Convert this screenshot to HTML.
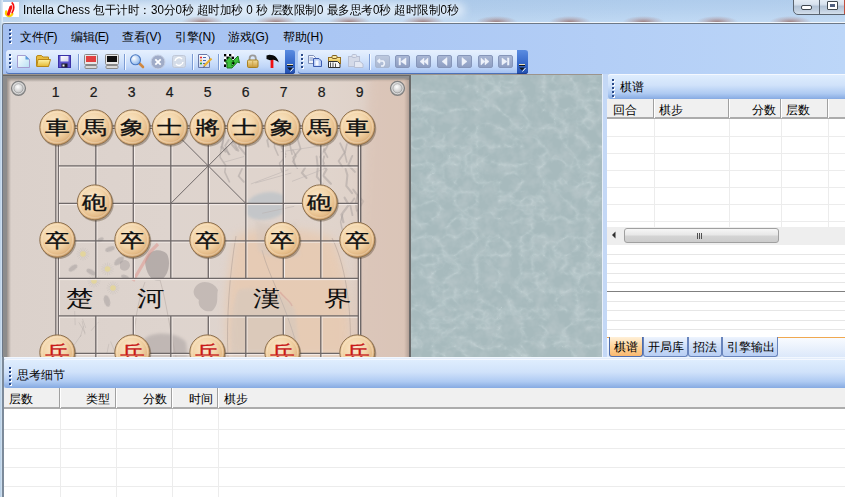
<!DOCTYPE html><html><head><meta charset="utf-8"><style>
*{box-sizing:border-box}
html,body{margin:0;padding:0}
body{width:845px;height:497px;overflow:hidden;position:relative;font-family:"Liberation Sans",sans-serif;font-size:12px;color:#000;background:#c9dcf0}
.ab{position:absolute}
.t{position:absolute;white-space:nowrap;line-height:1}
</style></head><body>

<div class="ab" style="left:0;top:0;width:845px;height:23px;background:linear-gradient(90deg,#bcd4ec 0%,#c4daf0 30%,#b8d2ee 55%,#bcd6f2 80%,#c0d8f2 100%)"></div>
<div class="ab" style="left:0;top:0;width:845px;height:23px;background:linear-gradient(rgba(150,185,225,0.35) 0%,rgba(150,185,225,0.2) 40%,rgba(220,240,255,0.15) 100%)"></div>
<div class="ab" style="left:20px;top:3px;width:445px;height:14px;background:rgba(236,244,252,0.75);filter:blur(4px);border-radius:7px"></div>
<div class="ab" style="left:0;top:0;width:845px;height:23px;background:radial-gradient(ellipse 21px 6px at 202.5px 22px, rgba(140,75,60,0.6), rgba(160,90,75,0.25) 55%, rgba(170,90,80,0) 100%),radial-gradient(ellipse 21px 6px at 276.0px 22px, rgba(140,75,60,0.6), rgba(160,90,75,0.25) 55%, rgba(170,90,80,0) 100%),radial-gradient(ellipse 21px 6px at 349.5px 22px, rgba(140,75,60,0.6), rgba(160,90,75,0.25) 55%, rgba(170,90,80,0) 100%),radial-gradient(ellipse 21px 6px at 423.0px 22px, rgba(140,75,60,0.6), rgba(160,90,75,0.25) 55%, rgba(170,90,80,0) 100%),radial-gradient(ellipse 21px 6px at 496.5px 22px, rgba(140,75,60,0.6), rgba(160,90,75,0.25) 55%, rgba(170,90,80,0) 100%),radial-gradient(ellipse 21px 6px at 570.0px 22px, rgba(140,75,60,0.6), rgba(160,90,75,0.25) 55%, rgba(170,90,80,0) 100%),radial-gradient(ellipse 21px 6px at 643.5px 22px, rgba(140,75,60,0.6), rgba(160,90,75,0.25) 55%, rgba(170,90,80,0) 100%),radial-gradient(ellipse 21px 6px at 717.0px 22px, rgba(140,75,60,0.6), rgba(160,90,75,0.25) 55%, rgba(170,90,80,0) 100%),radial-gradient(ellipse 21px 6px at 790.5px 22px, rgba(140,75,60,0.6), rgba(160,90,75,0.25) 55%, rgba(170,90,80,0) 100%)"></div>
<div class="ab" style="left:3px;top:2px;width:16px;height:15px;background:#fff"></div>
<svg class="ab" style="left:0;top:0" width="22" height="20" viewBox="0 0 22 20">
<path d="M6.2 11.5 C5.5 14 7 16.3 9.5 16 C11 15.8 12 15 12.3 14" stroke="#ffd000" stroke-width="2.4" fill="none" stroke-linecap="round"/>
<path d="M8.3 14.2 L10.8 7.2" stroke="#f41010" stroke-width="3" stroke-linecap="round"/>
<path d="M9.5 6.5 L11.8 4.8 L11.5 7.2Z" fill="#f41010"/>
<path d="M12.2 3 C14.2 4.5 14.3 9.5 12.2 12.5" stroke="#f41010" stroke-width="1.7" fill="none" stroke-linecap="round"/>
</svg>
<div class="t" style="left:23px;top:4px;font-size:12px;color:#000;transform:scaleX(0.965);transform-origin:0 0">Intella Chess 包干计时：30分0秒 超时加秒 0 秒 层数限制0 最多思考0秒 超时限制0秒</div>
<div class="ab" style="left:793px;top:-2px;width:54px;height:17px;border:1px solid #5a6470;border-radius:0 0 0 5px;background:linear-gradient(#e6eef6 0%,#d8e2ee 35%,#b4c4d6 50%,#c4d2e2 80%,#d4e0ec 100%)"></div>
<div class="ab" style="left:819px;top:0;width:1px;height:14px;background:#5a6470"></div>
<div class="ab" style="left:801px;top:5px;width:11px;height:5px;border:1px solid #404850;border-radius:2px;background:#fff"></div>
<div class="ab" style="left:827px;top:1px;width:11px;height:9px;border:1px solid #404850;border-radius:1px;background:#fff"><div class="ab" style="left:2px;top:2px;width:5px;height:3px;background:#506080"></div></div>
<div class="ab" style="left:844px;top:0;width:1px;height:14px;background:#c05040"></div>

<div class="ab" style="left:5px;top:22px;width:840px;height:1px;background:#f0f6fc"></div>
<div class="ab" style="left:1px;top:22px;width:10px;height:60px;border-left:1px solid rgba(240,246,252,0.8);border-top:1px solid #f0f6fc;border-top-left-radius:4px"></div>
<div class="ab" style="left:0;top:0;width:3px;height:497px;background:linear-gradient(90deg,#b4cce4,#e4f0fa)"></div>
<div class="ab" style="left:6px;top:23px;width:839px;height:1px;background:#6d7886"></div>
<div class="ab" style="left:2px;top:23px;width:10px;height:52px;border-left:1px solid #6d7886;border-top:1px solid #6d7886;border-top-left-radius:3px"></div>
<div class="ab" style="left:3px;top:24px;width:842px;height:50px;border-top-left-radius:2px;background:linear-gradient(90deg,#a4c0f0 0%,#abc7f4 45%,#bcd6f8 100%)"></div>
<div class="ab" style="left:9px;top:29px;width:2px;height:2px;background:#2a4a8a;box-shadow:1px 1px 0 #fff"></div><div class="ab" style="left:9px;top:33px;width:2px;height:2px;background:#2a4a8a;box-shadow:1px 1px 0 #fff"></div><div class="ab" style="left:9px;top:37px;width:2px;height:2px;background:#2a4a8a;box-shadow:1px 1px 0 #fff"></div><div class="ab" style="left:9px;top:41px;width:2px;height:2px;background:#2a4a8a;box-shadow:1px 1px 0 #fff"></div>
<div class="t" style="left:19.5px;top:31px;font-size:12px">文件<span style="letter-spacing:-0.7px">(F)</span></div>
<div class="t" style="left:70.5px;top:31px;font-size:12px">编辑<span style="letter-spacing:-0.7px">(E)</span></div>
<div class="t" style="left:121.5px;top:31px;font-size:12px">查看(V)</div>
<div class="t" style="left:174.5px;top:31px;font-size:12px">引擎(N)</div>
<div class="t" style="left:227.5px;top:31px;font-size:12px">游戏(G)</div>
<div class="t" style="left:282.5px;top:31px;font-size:12px">帮助(H)</div>
<div class="ab" style="left:6px;top:50px;width:279px;height:24px;border-radius:3px 0 0 3px;background:linear-gradient(#e6f0fe 0%,#d6e6fc 35%,#c0d6f8 70%,#a0bef0 100%);box-shadow:inset 0 -1px 0 #4e72b8"></div>
<div class="ab" style="left:285px;top:50px;width:10px;height:24px;border-radius:0 3px 3px 0;background:linear-gradient(#5a8ce0 0%,#3a6ccc 50%,#2350b0 100%);box-shadow:inset 0 -1px 0 #1a3c90"></div><svg class="ab" style="left:287px;top:63px" width="8" height="10"><rect x="0" y="1" width="6" height="1" fill="#e8e0c0"/><rect x="0" y="2" width="6" height="1" fill="#101820"/><path d="M0 4.5H6L3 7.5Z" fill="#101820"/><path d="M6.5 5L3.5 8.5" stroke="#fff" stroke-width="1"/></svg>
<div class="ab" style="left:298px;top:50px;width:219px;height:24px;border-radius:3px 0 0 3px;background:linear-gradient(#e6f0fe 0%,#d6e6fc 35%,#c0d6f8 70%,#a0bef0 100%);box-shadow:inset 0 -1px 0 #4e72b8"></div>
<div class="ab" style="left:517px;top:50px;width:11px;height:24px;border-radius:0 3px 3px 0;background:linear-gradient(#5a8ce0 0%,#3a6ccc 50%,#2350b0 100%);box-shadow:inset 0 -1px 0 #1a3c90"></div><svg class="ab" style="left:519px;top:63px" width="8" height="10"><rect x="0" y="1" width="6" height="1" fill="#e8e0c0"/><rect x="0" y="2" width="6" height="1" fill="#101820"/><path d="M0 4.5H6L3 7.5Z" fill="#101820"/><path d="M6.5 5L3.5 8.5" stroke="#fff" stroke-width="1"/></svg>
<div class="ab" style="left:9px;top:54px;width:2px;height:2px;background:#2a4a8a;box-shadow:1px 1px 0 #fff"></div><div class="ab" style="left:9px;top:58px;width:2px;height:2px;background:#2a4a8a;box-shadow:1px 1px 0 #fff"></div><div class="ab" style="left:9px;top:62px;width:2px;height:2px;background:#2a4a8a;box-shadow:1px 1px 0 #fff"></div><div class="ab" style="left:9px;top:66px;width:2px;height:2px;background:#2a4a8a;box-shadow:1px 1px 0 #fff"></div>
<div class="ab" style="left:301px;top:54px;width:2px;height:2px;background:#2a4a8a;box-shadow:1px 1px 0 #fff"></div><div class="ab" style="left:301px;top:58px;width:2px;height:2px;background:#2a4a8a;box-shadow:1px 1px 0 #fff"></div><div class="ab" style="left:301px;top:62px;width:2px;height:2px;background:#2a4a8a;box-shadow:1px 1px 0 #fff"></div><div class="ab" style="left:301px;top:66px;width:2px;height:2px;background:#2a4a8a;box-shadow:1px 1px 0 #fff"></div>
<svg class="ab" style="left:17px;top:55px" width="14" height="14"><defs><linearGradient id="gd" x1="0" y1="0" x2="1" y2="1"><stop offset="0" stop-color="#ffffff"/><stop offset="1" stop-color="#b8e0f4"/></linearGradient></defs><path d="M0.5 0.5H8.5L12.5 4.5V12.5H0.5Z" fill="url(#gd)" stroke="#a49cd0"/><path d="M8.5 0.5L12.5 4.5H8.5Z" fill="#5a9ee0"/></svg><svg class="ab" style="left:36px;top:55px" width="16" height="13"><defs><linearGradient id="gf" x1="0" y1="0" x2="0" y2="1"><stop offset="0" stop-color="#fff4a8"/><stop offset="1" stop-color="#e4b830"/></linearGradient></defs><path d="M0.5 11V2Q0.5 0.5 2 0.5H5.5L7 2H12.5V11Z" fill="#e8bc40" stroke="#b88818"/><path d="M2 4.5H14.5L12.5 11.5H0.8Z" fill="url(#gf)" stroke="#b88818"/></svg><svg class="ab" style="left:58px;top:55px" width="13" height="13"><defs><linearGradient id="gl" x1="0" y1="0" x2="1" y2="1"><stop offset="0" stop-color="#ffffff"/><stop offset="1" stop-color="#d4d4ec"/></linearGradient></defs><rect x="0.5" y="0.5" width="12" height="12" fill="#5c54cc" stroke="#3a32a8"/><rect x="2.5" y="1" width="8" height="5.5" fill="url(#gl)"/><rect x="3.5" y="8.5" width="6" height="4" fill="#1c1c2c"/><rect x="4.5" y="9.5" width="2" height="2" fill="#f0f0f0"/></svg><div class="ab" style="left:78px;top:54px;width:1px;height:16px;background:#7c9cd4;box-shadow:1px 0 0 #f4f8ff"></div><svg class="ab" style="left:84px;top:54px" width="14" height="15"><rect x="0.5" y="0.5" width="13" height="10" rx="1" fill="#e8e8e8" stroke="#888"/><rect x="2" y="2" width="10" height="6" fill="#e04040"/><rect x="1" y="11.5" width="12" height="3" rx="1" fill="#d8d8d8" stroke="#888"/></svg><svg class="ab" style="left:105px;top:54px" width="14" height="15"><rect x="0.5" y="0.5" width="13" height="10" rx="1" fill="#e8e8e8" stroke="#888"/><rect x="2" y="2" width="10" height="6" fill="#101010"/><rect x="1" y="11.5" width="12" height="3" rx="1" fill="#d8d8d8" stroke="#888"/></svg><div class="ab" style="left:124px;top:54px;width:1px;height:16px;background:#7c9cd4;box-shadow:1px 0 0 #f4f8ff"></div><svg class="ab" style="left:129px;top:53px" width="16" height="16"><defs><radialGradient id="gm" cx="35%" cy="35%" r="70%"><stop offset="0" stop-color="#ffffff"/><stop offset="1" stop-color="#88b4ec"/></radialGradient></defs><path d="M10 10L14 14" stroke="#d08840" stroke-width="2.6" stroke-linecap="round"/><circle cx="6.5" cy="6.8" r="5" fill="url(#gm)" stroke="#4a78c0" stroke-width="1.1"/></svg><svg class="ab" style="left:150px;top:54px" width="16" height="16"><circle cx="8" cy="8" r="7" fill="#a0acc8" stroke="#c8d2e6"/><path d="M5.3 5.3L10.7 10.7M10.7 5.3L5.3 10.7" stroke="#fff" stroke-width="1.8"/></svg><svg class="ab" style="left:172px;top:55px" width="14" height="13"><rect x="0.5" y="0.5" width="13" height="12" rx="2" fill="#d4dce8" stroke="#c0c8d8"/><path d="M3 6A4 4 0 0 1 10 4M11 7A4 4 0 0 1 4 9" stroke="#fff" stroke-width="1.5" fill="none"/></svg><div class="ab" style="left:192px;top:54px;width:1px;height:16px;background:#7c9cd4;box-shadow:1px 0 0 #f4f8ff"></div><svg class="ab" style="left:198px;top:54px" width="15" height="14"><defs><linearGradient id="gn" x1="0" y1="0" x2="0" y2="1"><stop offset="0" stop-color="#ffffff"/><stop offset="1" stop-color="#c8d4f0"/></linearGradient></defs><path d="M0.5 0.5H9L11.5 3V13.5H0.5Z" fill="url(#gn)" stroke="#6878a8"/><circle cx="3" cy="3.5" r="1.1" fill="#e83030"/><circle cx="3" cy="6.5" r="1.1" fill="#f0a020"/><circle cx="3" cy="9.5" r="1.1" fill="#30a030"/><path d="M5 3.5H8M5 6.5H8M5 9.5H7" stroke="#4868b0"/><path d="M6 12L13.5 4.5" stroke="#e8b030" stroke-width="2.2"/><path d="M6 12L5 13.5L6.8 12.8Z" fill="#303030"/></svg><div class="ab" style="left:218px;top:54px;width:1px;height:16px;background:#7c9cd4;box-shadow:1px 0 0 #f4f8ff"></div><svg class="ab" style="left:223px;top:53px" width="18" height="16"><rect x="1.0" y="1.0" width="2.5" height="2.6" fill="#000"/><rect x="3.5" y="1.0" width="2.5" height="2.6" fill="#fff"/><rect x="6.0" y="1.0" width="2.5" height="2.6" fill="#000"/><rect x="8.5" y="1.0" width="2.5" height="2.6" fill="#fff"/><rect x="1.0" y="3.6" width="2.5" height="2.6" fill="#fff"/><rect x="3.5" y="3.6" width="2.5" height="2.6" fill="#000"/><rect x="6.0" y="3.6" width="2.5" height="2.6" fill="#fff"/><rect x="8.5" y="3.6" width="2.5" height="2.6" fill="#000"/><rect x="1.0" y="6.2" width="2.5" height="2.6" fill="#000"/><rect x="3.5" y="6.2" width="2.5" height="2.6" fill="#fff"/><rect x="6.0" y="6.2" width="2.5" height="2.6" fill="#000"/><rect x="8.5" y="6.2" width="2.5" height="2.6" fill="#fff"/><rect x="1.0" y="8.8" width="2.5" height="2.6" fill="#fff"/><rect x="3.5" y="8.8" width="2.5" height="2.6" fill="#000"/><rect x="6.0" y="8.8" width="2.5" height="2.6" fill="#fff"/><rect x="8.5" y="8.8" width="2.5" height="2.6" fill="#000"/><rect x="1.0" y="11.4" width="2.5" height="2.6" fill="#000"/><rect x="3.5" y="11.4" width="2.5" height="2.6" fill="#fff"/><rect x="6.0" y="11.4" width="2.5" height="2.6" fill="#000"/><rect x="8.5" y="11.4" width="2.5" height="2.6" fill="#fff"/><path d="M4 15L4 9L2 9L6.5 4L11 9L9 9L9 13L12 10L10 8L15 3L16.5 10L14.5 9L9 15Z" fill="#3cc03c" stroke="#107010" stroke-width="0.9" stroke-linejoin="round"/></svg><svg class="ab" style="left:247px;top:54px" width="12" height="14"><defs><linearGradient id="gk" x1="0" y1="0" x2="0" y2="1"><stop offset="0" stop-color="#f4e0a0"/><stop offset="1" stop-color="#c89838"/></linearGradient></defs><path d="M2.6 6.5V4.4A3.1 3.1 0 0 1 8.8 4.4V6.5" stroke="#9a9a9a" stroke-width="1.8" fill="none"/><rect x="0.5" y="6" width="10.5" height="7.5" rx="1.2" fill="url(#gk)" stroke="#a88020"/><path d="M5.7 7V13" stroke="#c8a040" stroke-width="0.8"/></svg><svg class="ab" style="left:265px;top:54px" width="15" height="15"><rect x="5.6" y="4" width="2.8" height="10" fill="#f01010"/><path d="M1.5 1.5L4.5 0.8L8 1.3C11 2.2 13 5 13.8 8.6C11.8 6.8 10 5.8 8 5.8L5 6.2L1.5 5Z" fill="#0a0a0a"/></svg><svg class="ab" style="left:308px;top:55px" width="15" height="12"><path d="M0.5 0.5H5.5L7.5 2.5V8.5H0.5Z" fill="#f0f4fc" stroke="#8090b8"/><path d="M1.5 3H5M1.5 5H5" stroke="#6080c0" stroke-width="0.8"/><path d="M5.5 3.5H11L13.5 6V11.5H5.5Z" fill="#b8ccf4" stroke="#3c5cb0"/><rect x="7.5" y="5.5" width="3" height="5" fill="#f4f8ff"/></svg><svg class="ab" style="left:328px;top:55px" width="15" height="13"><defs><linearGradient id="gp" x1="0" y1="0" x2="0" y2="1"><stop offset="0" stop-color="#fff0a0"/><stop offset="1" stop-color="#d8a830"/></linearGradient></defs><rect x="0.5" y="2.5" width="12" height="6" fill="url(#gp)" stroke="#987020"/><rect x="4" y="0.5" width="5" height="3" rx="1" fill="#f8e8a0" stroke="#806020"/><path d="M0.5 6.5H9.5L12 9V12.5H0.5Z" fill="#f8f8f8" stroke="#303030"/><path d="M2.5 7.5V12M5 7.5V12M7.5 8.5V12" stroke="#404040" stroke-width="0.9"/></svg><svg class="ab" style="left:348px;top:54px" width="16" height="14"><rect x="0.5" y="2.5" width="11" height="10" fill="#d4dae8" stroke="#b8c0d4"/><rect x="4" y="0.5" width="4.5" height="3" rx="1" fill="#e0e4ee" stroke="#b8c0d4"/><path d="M6.5 7.5H12L15 10V13.5H6.5Z" fill="#e4e8f2" stroke="#b8c0d4"/></svg><div class="ab" style="left:369px;top:54px;width:1px;height:16px;background:#7c9cd4;box-shadow:1px 0 0 #f4f8ff"></div><div class="ab" style="left:375px;top:55px;width:15px;height:13px;border:1px solid #a8b6d0;border-radius:2px;background:linear-gradient(#bcc8de,#aab8d2)"></div><svg class="ab" style="left:375px;top:54px" width="15" height="15"><g fill="#eef2fa" stroke="#eef2fa" stroke-width="0.5"><path d="M5 5L3 7L5 9M3 7H8A3 3 0 0 1 8 12H6" fill="none" stroke-width="1.6"/></g></svg><div class="ab" style="left:395px;top:55px;width:15px;height:13px;border:1px solid #8696ba;border-radius:2px;background:linear-gradient(#a8b6d4,#8e9ec2)"></div><svg class="ab" style="left:395px;top:54px" width="15" height="15"><g fill="#eef2fa" stroke="#eef2fa" stroke-width="0.5"><rect x="4" y="4" width="1.5" height="7"/><path d="M11 4V11L6 7.5Z"/></g></svg><div class="ab" style="left:416px;top:55px;width:15px;height:13px;border:1px solid #8696ba;border-radius:2px;background:linear-gradient(#a8b6d4,#8e9ec2)"></div><svg class="ab" style="left:416px;top:54px" width="15" height="15"><g fill="#eef2fa" stroke="#eef2fa" stroke-width="0.5"><path d="M8 4V11L4 7.5Z"/><path d="M12 4V11L8 7.5Z"/></g></svg><div class="ab" style="left:437px;top:55px;width:15px;height:13px;border:1px solid #8696ba;border-radius:2px;background:linear-gradient(#a8b6d4,#8e9ec2)"></div><svg class="ab" style="left:437px;top:54px" width="15" height="15"><g fill="#eef2fa" stroke="#eef2fa" stroke-width="0.5"><path d="M10 3.5V11.5L5 7.5Z"/></g></svg><div class="ab" style="left:457px;top:55px;width:15px;height:13px;border:1px solid #8696ba;border-radius:2px;background:linear-gradient(#a8b6d4,#8e9ec2)"></div><svg class="ab" style="left:457px;top:54px" width="15" height="15"><g fill="#eef2fa" stroke="#eef2fa" stroke-width="0.5"><path d="M5 3.5V11.5L10 7.5Z"/></g></svg><div class="ab" style="left:478px;top:55px;width:15px;height:13px;border:1px solid #8696ba;border-radius:2px;background:linear-gradient(#a8b6d4,#8e9ec2)"></div><svg class="ab" style="left:478px;top:54px" width="15" height="15"><g fill="#eef2fa" stroke="#eef2fa" stroke-width="0.5"><path d="M3 4V11L7 7.5Z"/><path d="M7 4V11L11 7.5Z"/></g></svg><div class="ab" style="left:498px;top:55px;width:15px;height:13px;border:1px solid #8696ba;border-radius:2px;background:linear-gradient(#a8b6d4,#8e9ec2)"></div><svg class="ab" style="left:498px;top:54px" width="15" height="15"><g fill="#eef2fa" stroke="#eef2fa" stroke-width="0.5"><rect x="9.5" y="4" width="1.5" height="7"/><path d="M4 4V11L9 7.5Z"/></g></svg>
<div class="ab" style="left:3px;top:74px;width:599px;height:1px;background:#9c948c"></div>
<div class="ab" style="left:2px;top:75px;width:1px;height:282px;background:#6c7888"></div>
<div class="ab" style="left:3px;top:75px;width:406px;height:282px;background:#8c8c8c"></div>
<div class="ab" style="left:3px;top:75px;width:406px;height:1px;background:#686868"></div>
<div class="ab" style="left:7px;top:78px;width:402px;height:279px;background:linear-gradient(90deg,#dbd1cb 0%,#ded4ce 40%,#e0d4cc 80%,#decec4 100%)"></div>
<div class="ab" style="left:7px;top:78px;width:402px;height:4px;background:linear-gradient(#948c86,rgba(220,210,204,0))"></div>
<div class="ab" style="left:7px;top:78px;width:4px;height:279px;background:linear-gradient(90deg,#9a928c,rgba(220,210,204,0))"></div>
<div class="ab" style="left:404px;top:78px;width:5px;height:279px;background:linear-gradient(90deg,rgba(150,140,132,0),#8e8682)"></div>
<div class="ab" style="left:409px;top:75px;width:1.5px;height:282px;background:#6a6a6a"></div>
<div class="ab" style="left:410.5px;top:75px;width:0.5px;height:282px;background:#8a9698"></div>
<svg class="ab" style="left:0;top:0" width="845" height="497" viewBox="0 0 845 497"><defs><radialGradient id="pc" cx="42%" cy="38%" r="62%"><stop offset="0" stop-color="#fae8cc"/><stop offset="0.55" stop-color="#f2d4a8"/><stop offset="0.85" stop-color="#e4ba86"/><stop offset="1" stop-color="#c89a64"/></radialGradient><radialGradient id="btn" cx="45%" cy="40%" r="60%"><stop offset="0" stop-color="#ffffff"/><stop offset="1" stop-color="#a8a8a8"/></radialGradient><clipPath id="bc"><rect x="9" y="80" width="400" height="277"/></clipPath></defs><g clip-path="url(#bc)"><filter id="pb" x="-20%" y="-20%" width="140%" height="140%"><feGaussianBlur stdDeviation="1.6"/></filter><filter id="pb2" x="-20%" y="-20%" width="140%" height="140%"><feGaussianBlur stdDeviation="0.5"/></filter><filter id="pb3" x="-30%" y="-30%" width="160%" height="160%"><feGaussianBlur stdDeviation="5"/></filter><path d="M236 236 C255 226 305 226 332 238 C348 270 352 320 350 357 L228 357 C224 320 226 270 236 236Z" fill="#ecc4a2" opacity="0.55" filter="url(#pb3)"/><path d="M236 236 C230 270 226 320 228 357 M332 238 C348 270 352 320 350 357 M262 250 C270 280 285 300 300 357" stroke="#b4a49a" stroke-width="1" fill="none" opacity="0.6"/><path d="M280 292 C284 298 290 300 292 306" stroke="#d89890" stroke-width="1.5" fill="none" opacity="0.5"/><path d="M238 290 C255 285 285 290 295 310 L300 357 L232 357 C230 330 232 305 238 290Z" fill="#c4c6c8" opacity="0.3" filter="url(#pb)"/><path d="M246 205 C250 192 275 188 284 196 L282 214 C270 222 252 222 246 214Z" fill="#aebcc6" opacity="0.55" filter="url(#pb)"/><path d="M255 220 C265 225 285 228 296 222 L300 255 C285 262 265 258 258 250Z" fill="#d4c8c0" opacity="0.5" filter="url(#pb)"/><path d="M196 286 C202 279 214 282 218 290 C216 296 220 304 212 311 C204 313 197 306 199 300 C193 296 192 291 196 286Z" fill="#8e8686" opacity="0.32" filter="url(#pb2)"/><path d="M145 262 C147 250 160 247 167 254 C171 262 169 275 161 280 C152 283 146 274 145 262Z" fill="#767072" opacity="0.38" filter="url(#pb2)"/><path d="M133 281 L150 252 L158 244" stroke="#e08c84" stroke-width="3.2" fill="none" opacity="0.45" filter="url(#pb2)"/><path d="M143 340 C152 330 178 332 186 342 L188 357 L140 357Z" fill="#8a8486" opacity="0.35" filter="url(#pb)"/><path d="M160 280 C166 300 170 330 176 357 M145 282 C138 300 132 330 135 357" stroke="#b4aaa4" stroke-width="0.9" fill="none" opacity="0.6"/><path d="M120 262 C124 258 130 260 130 266 C128 272 122 272 120 268Z" fill="#9a9494" opacity="0.4" filter="url(#pb2)"/><ellipse cx="119" cy="261" rx="6" ry="3" transform="rotate(-40 119 261)" fill="#9c9696" opacity="0.45" filter="url(#pb2)"/><ellipse cx="110" cy="249" rx="5" ry="2.5" transform="rotate(-20 110 249)" fill="#9c9696" opacity="0.45" filter="url(#pb2)"/><ellipse cx="91" cy="272" rx="5" ry="2.5" transform="rotate(30 91 272)" fill="#9c9696" opacity="0.45" filter="url(#pb2)"/><ellipse cx="107" cy="301" rx="3" ry="6" transform="rotate(-15 107 301)" fill="#9c9696" opacity="0.45" filter="url(#pb2)"/><ellipse cx="73" cy="268" rx="5" ry="2.5" transform="rotate(-35 73 268)" fill="#9c9696" opacity="0.45" filter="url(#pb2)"/><ellipse cx="125" cy="277" rx="4" ry="2" transform="rotate(20 125 277)" fill="#9c9696" opacity="0.45" filter="url(#pb2)"/><ellipse cx="100" cy="240" rx="4" ry="2" transform="rotate(-30 100 240)" fill="#9c9696" opacity="0.45" filter="url(#pb2)"/><path d="M85.5 254.0L89.5 254.0M85.3 255.0L89.0 256.5M84.8 255.8L87.6 258.6M84.0 256.3L85.5 260.0M83.0 256.5L83.0 260.5M82.0 256.3L80.5 260.0M81.2 255.8L78.4 258.6M80.7 255.0L77.0 256.5M80.5 254.0L76.5 254.0M80.7 253.0L77.0 251.5M81.2 252.2L78.4 249.4M82.0 251.7L80.5 248.0M83.0 251.5L83.0 247.5M84.0 251.7L85.5 248.0M84.8 252.2L87.6 249.4M85.3 253.0L89.0 251.5" stroke="#c8c2bc" stroke-width="0.7" opacity="0.7"/><circle cx="83" cy="254" r="2.8" fill="#e6d68e" opacity="0.75" filter="url(#pb2)"/><path d="M110.0 269.0L114.0 269.0M109.8 270.0L113.5 271.5M109.3 270.8L112.1 273.6M108.5 271.3L110.0 275.0M107.5 271.5L107.5 275.5M106.5 271.3L105.0 275.0M105.7 270.8L102.9 273.6M105.2 270.0L101.5 271.5M105.0 269.0L101.0 269.0M105.2 268.0L101.5 266.5M105.7 267.2L102.9 264.4M106.5 266.7L105.0 263.0M107.5 266.5L107.5 262.5M108.5 266.7L110.0 263.0M109.3 267.2L112.1 264.4M109.8 268.0L113.5 266.5" stroke="#c8c2bc" stroke-width="0.7" opacity="0.7"/><circle cx="107.5" cy="269" r="2.8" fill="#e6d68e" opacity="0.75" filter="url(#pb2)"/><path d="M96.5 281.0L100.5 281.0M96.3 282.0L100.0 283.5M95.8 282.8L98.6 285.6M95.0 283.3L96.5 287.0M94.0 283.5L94.0 287.5M93.0 283.3L91.5 287.0M92.2 282.8L89.4 285.6M91.7 282.0L88.0 283.5M91.5 281.0L87.5 281.0M91.7 280.0L88.0 278.5M92.2 279.2L89.4 276.4M93.0 278.7L91.5 275.0M94.0 278.5L94.0 274.5M95.0 278.7L96.5 275.0M95.8 279.2L98.6 276.4M96.3 280.0L100.0 278.5" stroke="#c8c2bc" stroke-width="0.7" opacity="0.7"/><circle cx="94" cy="281" r="2.8" fill="#e6d68e" opacity="0.75" filter="url(#pb2)"/><path d="M115.5 288.0L119.5 288.0M115.3 289.0L119.0 290.5M114.8 289.8L117.6 292.6M114.0 290.3L115.5 294.0M113.0 290.5L113.0 294.5M112.0 290.3L110.5 294.0M111.2 289.8L108.4 292.6M110.7 289.0L107.0 290.5M110.5 288.0L106.5 288.0M110.7 287.0L107.0 285.5M111.2 286.2L108.4 283.4M112.0 285.7L110.5 282.0M113.0 285.5L113.0 281.5M114.0 285.7L115.5 282.0M114.8 286.2L117.6 283.4M115.3 287.0L119.0 285.5" stroke="#c8c2bc" stroke-width="0.7" opacity="0.7"/><circle cx="113" cy="288" r="2.8" fill="#e6d68e" opacity="0.75" filter="url(#pb2)"/><path d="M229.7 154.5 L222.3 146.6 L223.7 137.2 L222.6 130.0 L223.9 121.6" stroke="#a8a09e" stroke-width="1.5" fill="none" opacity="0.5" stroke-linecap="round"/><path d="M236.5 150.0 L231.8 144.3 L237.7 134.2 L234.5 126.5 L238.9 121.9" stroke="#a8a09e" stroke-width="2.1" fill="none" opacity="0.5" stroke-linecap="round"/><path d="M228.7 154.2 L225.2 145.5 L228.7 139.9" stroke="#a8a09e" stroke-width="1.8" fill="none" opacity="0.5" stroke-linecap="round"/><path d="M225.6 151.9 L221.3 147.2 L223.7 137.4 L220.0 130.4 L224.1 122.7" stroke="#a8a09e" stroke-width="1.6" fill="none" opacity="0.5" stroke-linecap="round"/><path d="M243.8 181.9 L238.6 176.1 L242.0 168.8" stroke="#a8a09e" stroke-width="1.7" fill="none" opacity="0.5" stroke-linecap="round"/><path d="M238.3 150.7 L233.3 141.4 L235.0 132.6 L228.1 125.3 L233.6 117.7" stroke="#a8a09e" stroke-width="2.1" fill="none" opacity="0.5" stroke-linecap="round"/><path d="M229.4 181.8 L224.8 172.0 L225.7 165.5 L220.0 157.1 L221.4 146.8" stroke="#a8a09e" stroke-width="1.6" fill="none" opacity="0.5" stroke-linecap="round"/><path d="M297.3 168.3 L292.7 161.4 L296.0 156.2 L292.8 149.9" stroke="#a8a09e" stroke-width="1.4" fill="none" opacity="0.5" stroke-linecap="round"/><path d="M281.8 171.4 L279.5 163.3 L285.5 156.6" stroke="#a8a09e" stroke-width="1.4" fill="none" opacity="0.5" stroke-linecap="round"/><path d="M292.0 154.2 L289.7 143.3 L292.0 135.1" stroke="#a8a09e" stroke-width="1.6" fill="none" opacity="0.5" stroke-linecap="round"/><path d="M306.5 178.0 L301.9 172.9 L305.1 167.7" stroke="#a8a09e" stroke-width="2.0" fill="none" opacity="0.5" stroke-linecap="round"/><path d="M285.5 154.4 L281.6 147.1 L287.0 136.8" stroke="#a8a09e" stroke-width="1.9" fill="none" opacity="0.5" stroke-linecap="round"/><path d="M295.5 166.1 L293.1 157.7 L300.6 148.7 L297.8 139.8 L300.8 132.0" stroke="#a8a09e" stroke-width="1.7" fill="none" opacity="0.5" stroke-linecap="round"/><path d="M327.5 157.2 L324.4 151.3 L327.7 145.5" stroke="#a8a09e" stroke-width="1.8" fill="none" opacity="0.5" stroke-linecap="round"/><path d="M330.9 183.7 L323.1 175.6 L326.5 169.6 L321.9 163.0 L324.1 156.6" stroke="#a8a09e" stroke-width="2.1" fill="none" opacity="0.5" stroke-linecap="round"/><path d="M342.3 166.8 L338.6 161.0 L344.6 152.5 L340.2 143.3" stroke="#a8a09e" stroke-width="1.8" fill="none" opacity="0.5" stroke-linecap="round"/><path d="M322.6 183.8 L316.8 176.6 L317.8 167.5 L316.6 156.4" stroke="#a8a09e" stroke-width="1.9" fill="none" opacity="0.5" stroke-linecap="round"/><path d="M324.0 163.3 L320.3 157.0 L324.3 149.0" stroke="#a8a09e" stroke-width="1.9" fill="none" opacity="0.5" stroke-linecap="round"/><path d="M352.5 215.2 L350.1 204.5 L354.3 198.5" stroke="#a8a09e" stroke-width="1.8" fill="none" opacity="0.5" stroke-linecap="round"/><path d="M346.8 162.0 L344.8 153.4 L346.9 144.0" stroke="#a8a09e" stroke-width="1.6" fill="none" opacity="0.5" stroke-linecap="round"/><path d="M356.8 210.6 L355.8 202.5 L357.6 195.3 L353.2 189.6" stroke="#a8a09e" stroke-width="1.9" fill="none" opacity="0.5" stroke-linecap="round"/><path d="M358.8 218.8 L357.6 210.9 L363.2 201.4 L357.8 195.0" stroke="#a8a09e" stroke-width="1.9" fill="none" opacity="0.5" stroke-linecap="round"/><path d="M343.4 222.2 L341.5 214.5 L348.7 205.0 L344.6 197.7" stroke="#a8a09e" stroke-width="2.2" fill="none" opacity="0.5" stroke-linecap="round"/><path d="M354.9 171.9 L348.3 165.0 L352.3 155.9" stroke="#a8a09e" stroke-width="1.9" fill="none" opacity="0.5" stroke-linecap="round"/><path d="M352.1 193.2 L346.3 186.0 L347.4 175.2 L345.6 168.9" stroke="#a8a09e" stroke-width="2.0" fill="none" opacity="0.5" stroke-linecap="round"/><path d="M342.1 229.1 L340.6 221.9 L342.6 214.5" stroke="#a8a09e" stroke-width="1.5" fill="none" opacity="0.5" stroke-linecap="round"/><path d="M268.5 146.6 L267.2 140.4 L273.6 131.0 L270.2 120.7" stroke="#a8a09e" stroke-width="1.8" fill="none" opacity="0.5" stroke-linecap="round"/><path d="M278.1 155.3 L274.4 146.9 L275.3 138.3" stroke="#a8a09e" stroke-width="1.5" fill="none" opacity="0.5" stroke-linecap="round"/><path d="M245.2 154.2 L239.0 146.7 L240.1 140.4" stroke="#a8a09e" stroke-width="1.9" fill="none" opacity="0.5" stroke-linecap="round"/><line x1="292.0" y1="181.4" x2="327.5" y2="167.5" stroke="#b8b0ae" stroke-width="1" opacity="0.5"/><line x1="223.2" y1="162.4" x2="244.1" y2="156.5" stroke="#b8b0ae" stroke-width="1" opacity="0.5"/><line x1="280.6" y1="151.8" x2="318.4" y2="146.2" stroke="#b8b0ae" stroke-width="1" opacity="0.5"/><line x1="262.2" y1="213.3" x2="294.3" y2="206.3" stroke="#b8b0ae" stroke-width="1" opacity="0.5"/><line x1="255.2" y1="183.0" x2="291.3" y2="173.0" stroke="#b8b0ae" stroke-width="1" opacity="0.5"/><line x1="250.9" y1="184.0" x2="288.4" y2="169.7" stroke="#b8b0ae" stroke-width="1" opacity="0.5"/><line x1="115.4" y1="353.0" x2="110.6" y2="341.5" stroke="#bcb4b0" stroke-width="1" opacity="0.5"/><line x1="85.0" y1="334.5" x2="82.1" y2="321.1" stroke="#bcb4b0" stroke-width="1" opacity="0.5"/><line x1="85.7" y1="327.9" x2="82.5" y2="318.9" stroke="#bcb4b0" stroke-width="1" opacity="0.5"/><line x1="106.6" y1="354.8" x2="108.9" y2="343.8" stroke="#bcb4b0" stroke-width="1" opacity="0.5"/><line x1="75.2" y1="325.1" x2="74.7" y2="311.1" stroke="#bcb4b0" stroke-width="1" opacity="0.5"/><line x1="65.6" y1="352.7" x2="60.3" y2="339.4" stroke="#bcb4b0" stroke-width="1" opacity="0.5"/><line x1="73.4" y1="346.1" x2="81.3" y2="334.9" stroke="#bcb4b0" stroke-width="1" opacity="0.5"/><line x1="85.3" y1="333.2" x2="78.8" y2="322.3" stroke="#bcb4b0" stroke-width="1" opacity="0.5"/><line x1="80.3" y1="337.0" x2="83.5" y2="325.9" stroke="#bcb4b0" stroke-width="1" opacity="0.5"/><line x1="91.0" y1="330.9" x2="98.4" y2="322.0" stroke="#bcb4b0" stroke-width="1" opacity="0.5"/><path d="M370 60H430V380H350Z" fill="#d8bcac" opacity="0.5" filter="url(#pb3)"/><line x1="58.3" y1="129.6" x2="358.3" y2="129.6" stroke="#f4ece8" stroke-width="1"/><line x1="58.3" y1="167.1" x2="358.3" y2="167.1" stroke="#f4ece8" stroke-width="1"/><line x1="58.3" y1="204.6" x2="358.3" y2="204.6" stroke="#f4ece8" stroke-width="1"/><line x1="58.3" y1="242.1" x2="358.3" y2="242.1" stroke="#f4ece8" stroke-width="1"/><line x1="58.3" y1="279.59999999999997" x2="358.3" y2="279.59999999999997" stroke="#f4ece8" stroke-width="1"/><line x1="58.3" y1="317.09999999999997" x2="358.3" y2="317.09999999999997" stroke="#f4ece8" stroke-width="1"/><line x1="58.3" y1="354.59999999999997" x2="358.3" y2="354.59999999999997" stroke="#f4ece8" stroke-width="1"/><line x1="58.3" y1="392.09999999999997" x2="358.3" y2="392.09999999999997" stroke="#f4ece8" stroke-width="1"/><line x1="58.3" y1="429.59999999999997" x2="358.3" y2="429.59999999999997" stroke="#f4ece8" stroke-width="1"/><line x1="58.3" y1="467.09999999999997" x2="358.3" y2="467.09999999999997" stroke="#f4ece8" stroke-width="1"/><line x1="59.5" y1="128.4" x2="59.5" y2="465.9" stroke="#f4ece8" stroke-width="1"/><line x1="97.0" y1="128.4" x2="97.0" y2="278.4" stroke="#f4ece8" stroke-width="1"/><line x1="97.0" y1="315.9" x2="97.0" y2="465.9" stroke="#f4ece8" stroke-width="1"/><line x1="134.5" y1="128.4" x2="134.5" y2="278.4" stroke="#f4ece8" stroke-width="1"/><line x1="134.5" y1="315.9" x2="134.5" y2="465.9" stroke="#f4ece8" stroke-width="1"/><line x1="172.0" y1="128.4" x2="172.0" y2="278.4" stroke="#f4ece8" stroke-width="1"/><line x1="172.0" y1="315.9" x2="172.0" y2="465.9" stroke="#f4ece8" stroke-width="1"/><line x1="209.5" y1="128.4" x2="209.5" y2="278.4" stroke="#f4ece8" stroke-width="1"/><line x1="209.5" y1="315.9" x2="209.5" y2="465.9" stroke="#f4ece8" stroke-width="1"/><line x1="247.0" y1="128.4" x2="247.0" y2="278.4" stroke="#f4ece8" stroke-width="1"/><line x1="247.0" y1="315.9" x2="247.0" y2="465.9" stroke="#f4ece8" stroke-width="1"/><line x1="284.5" y1="128.4" x2="284.5" y2="278.4" stroke="#f4ece8" stroke-width="1"/><line x1="284.5" y1="315.9" x2="284.5" y2="465.9" stroke="#f4ece8" stroke-width="1"/><line x1="322.0" y1="128.4" x2="322.0" y2="278.4" stroke="#f4ece8" stroke-width="1"/><line x1="322.0" y1="315.9" x2="322.0" y2="465.9" stroke="#f4ece8" stroke-width="1"/><line x1="359.5" y1="128.4" x2="359.5" y2="465.9" stroke="#f4ece8" stroke-width="1"/><line x1="58.3" y1="128.4" x2="358.3" y2="128.4" stroke="#6e6868" stroke-width="1.3"/><line x1="58.3" y1="165.9" x2="358.3" y2="165.9" stroke="#6e6868" stroke-width="1.3"/><line x1="58.3" y1="203.4" x2="358.3" y2="203.4" stroke="#6e6868" stroke-width="1.3"/><line x1="58.3" y1="240.9" x2="358.3" y2="240.9" stroke="#6e6868" stroke-width="1.3"/><line x1="58.3" y1="278.4" x2="358.3" y2="278.4" stroke="#6e6868" stroke-width="1.3"/><line x1="58.3" y1="315.9" x2="358.3" y2="315.9" stroke="#6e6868" stroke-width="1.3"/><line x1="58.3" y1="353.4" x2="358.3" y2="353.4" stroke="#6e6868" stroke-width="1.3"/><line x1="58.3" y1="390.9" x2="358.3" y2="390.9" stroke="#6e6868" stroke-width="1.3"/><line x1="58.3" y1="428.4" x2="358.3" y2="428.4" stroke="#6e6868" stroke-width="1.3"/><line x1="58.3" y1="465.9" x2="358.3" y2="465.9" stroke="#6e6868" stroke-width="1.3"/><line x1="58.3" y1="128.4" x2="58.3" y2="465.9" stroke="#6e6868" stroke-width="1.3"/><line x1="95.8" y1="128.4" x2="95.8" y2="278.4" stroke="#6e6868" stroke-width="1.3"/><line x1="95.8" y1="315.9" x2="95.8" y2="465.9" stroke="#6e6868" stroke-width="1.3"/><line x1="133.3" y1="128.4" x2="133.3" y2="278.4" stroke="#6e6868" stroke-width="1.3"/><line x1="133.3" y1="315.9" x2="133.3" y2="465.9" stroke="#6e6868" stroke-width="1.3"/><line x1="170.8" y1="128.4" x2="170.8" y2="278.4" stroke="#6e6868" stroke-width="1.3"/><line x1="170.8" y1="315.9" x2="170.8" y2="465.9" stroke="#6e6868" stroke-width="1.3"/><line x1="208.3" y1="128.4" x2="208.3" y2="278.4" stroke="#6e6868" stroke-width="1.3"/><line x1="208.3" y1="315.9" x2="208.3" y2="465.9" stroke="#6e6868" stroke-width="1.3"/><line x1="245.8" y1="128.4" x2="245.8" y2="278.4" stroke="#6e6868" stroke-width="1.3"/><line x1="245.8" y1="315.9" x2="245.8" y2="465.9" stroke="#6e6868" stroke-width="1.3"/><line x1="283.3" y1="128.4" x2="283.3" y2="278.4" stroke="#6e6868" stroke-width="1.3"/><line x1="283.3" y1="315.9" x2="283.3" y2="465.9" stroke="#6e6868" stroke-width="1.3"/><line x1="320.8" y1="128.4" x2="320.8" y2="278.4" stroke="#6e6868" stroke-width="1.3"/><line x1="320.8" y1="315.9" x2="320.8" y2="465.9" stroke="#6e6868" stroke-width="1.3"/><line x1="358.3" y1="128.4" x2="358.3" y2="465.9" stroke="#6e6868" stroke-width="1.3"/><rect x="55.9" y="126.0" width="304.8" height="342.3" fill="none" stroke="#6e6868" stroke-width="1.4"/><rect x="57.099999999999994" y="127.2" width="302.4" height="339.9" fill="none" stroke="#f4ece8" stroke-width="0.8"/><line x1="170.8" y1="128.4" x2="245.8" y2="203.4" stroke="#6e6868" stroke-width="1"/><line x1="245.8" y1="128.4" x2="170.8" y2="203.4" stroke="#6e6868" stroke-width="1"/><line x1="170.8" y1="390.9" x2="245.8" y2="465.9" stroke="#6e6868" stroke-width="1"/><line x1="245.8" y1="390.9" x2="170.8" y2="465.9" stroke="#6e6868" stroke-width="1"/></g><circle cx="18.5" cy="88.3" r="7" fill="url(#btn)" stroke="#808080" stroke-width="1.2"/><circle cx="18.5" cy="88.3" r="5.4" fill="none" stroke="#e8e8e8" stroke-width="0.8"/><circle cx="18.5" cy="88.3" r="4.6" fill="none" stroke="#909090" stroke-width="0.6"/><circle cx="397.5" cy="88.3" r="7" fill="url(#btn)" stroke="#808080" stroke-width="1.2"/><circle cx="397.5" cy="88.3" r="5.4" fill="none" stroke="#e8e8e8" stroke-width="0.8"/><circle cx="397.5" cy="88.3" r="4.6" fill="none" stroke="#909090" stroke-width="0.6"/><text x="55.6" y="97.3" font-family="Liberation Sans" font-size="14" text-anchor="middle" fill="#1a1a1a" stroke="#1a1a1a" stroke-width="0.2">1</text><text x="93.6" y="97.3" font-family="Liberation Sans" font-size="14" text-anchor="middle" fill="#1a1a1a" stroke="#1a1a1a" stroke-width="0.2">2</text><text x="131.6" y="97.3" font-family="Liberation Sans" font-size="14" text-anchor="middle" fill="#1a1a1a" stroke="#1a1a1a" stroke-width="0.2">3</text><text x="169.6" y="97.3" font-family="Liberation Sans" font-size="14" text-anchor="middle" fill="#1a1a1a" stroke="#1a1a1a" stroke-width="0.2">4</text><text x="207.6" y="97.3" font-family="Liberation Sans" font-size="14" text-anchor="middle" fill="#1a1a1a" stroke="#1a1a1a" stroke-width="0.2">5</text><text x="245.6" y="97.3" font-family="Liberation Sans" font-size="14" text-anchor="middle" fill="#1a1a1a" stroke="#1a1a1a" stroke-width="0.2">6</text><text x="283.6" y="97.3" font-family="Liberation Sans" font-size="14" text-anchor="middle" fill="#1a1a1a" stroke="#1a1a1a" stroke-width="0.2">7</text><text x="321.6" y="97.3" font-family="Liberation Sans" font-size="14" text-anchor="middle" fill="#1a1a1a" stroke="#1a1a1a" stroke-width="0.2">8</text><text x="359.6" y="97.3" font-family="Liberation Sans" font-size="14" text-anchor="middle" fill="#1a1a1a" stroke="#1a1a1a" stroke-width="0.2">9</text><text transform="translate(80.2,298.2) scale(1.2,0.96)" x="0" y="8.5" font-family="Liberation Serif" font-weight="500" font-size="23" text-anchor="middle" fill="#101010">楚</text><text transform="translate(151.1,298.2) scale(1.2,0.96)" x="0" y="8.5" font-family="Liberation Serif" font-weight="500" font-size="23" text-anchor="middle" fill="#101010">河</text><text transform="translate(266.4,298.2) scale(1.2,0.96)" x="0" y="8.5" font-family="Liberation Serif" font-weight="500" font-size="23" text-anchor="middle" fill="#101010">漢</text><text transform="translate(337.5,298.2) scale(1.2,0.96)" x="0" y="8.5" font-family="Liberation Serif" font-weight="500" font-size="23" text-anchor="middle" fill="#101010">界</text><g clip-path="url(#bc)"><g><circle cx="58.3" cy="128.70000000000002" r="18" fill="rgba(70,50,30,0.35)" filter="url(#pb2)"/><circle cx="57.3" cy="127.4" r="17.5" fill="url(#pc)" stroke="#8c7050" stroke-width="1"/><circle cx="57.3" cy="127.4" r="15.4" fill="none" stroke="rgba(255,242,222,0.35)" stroke-width="1.4"/><text transform="translate(57.3,127.4) scale(1.12,0.86)" x="0" y="8" font-family="Liberation Serif" font-size="22" font-weight="500" text-anchor="middle" fill="#101010" stroke="#101010" stroke-width="0.4">車</text></g><g><circle cx="95.8" cy="128.70000000000002" r="18" fill="rgba(70,50,30,0.35)" filter="url(#pb2)"/><circle cx="94.8" cy="127.4" r="17.5" fill="url(#pc)" stroke="#8c7050" stroke-width="1"/><circle cx="94.8" cy="127.4" r="15.4" fill="none" stroke="rgba(255,242,222,0.35)" stroke-width="1.4"/><text transform="translate(94.8,127.4) scale(1.12,0.86)" x="0" y="8" font-family="Liberation Serif" font-size="22" font-weight="500" text-anchor="middle" fill="#101010" stroke="#101010" stroke-width="0.4">馬</text></g><g><circle cx="133.3" cy="128.70000000000002" r="18" fill="rgba(70,50,30,0.35)" filter="url(#pb2)"/><circle cx="132.3" cy="127.4" r="17.5" fill="url(#pc)" stroke="#8c7050" stroke-width="1"/><circle cx="132.3" cy="127.4" r="15.4" fill="none" stroke="rgba(255,242,222,0.35)" stroke-width="1.4"/><text transform="translate(132.3,127.4) scale(1.12,0.86)" x="0" y="8" font-family="Liberation Serif" font-size="22" font-weight="500" text-anchor="middle" fill="#101010" stroke="#101010" stroke-width="0.4">象</text></g><g><circle cx="170.8" cy="128.70000000000002" r="18" fill="rgba(70,50,30,0.35)" filter="url(#pb2)"/><circle cx="169.8" cy="127.4" r="17.5" fill="url(#pc)" stroke="#8c7050" stroke-width="1"/><circle cx="169.8" cy="127.4" r="15.4" fill="none" stroke="rgba(255,242,222,0.35)" stroke-width="1.4"/><text transform="translate(169.8,127.4) scale(1.12,0.86)" x="0" y="8" font-family="Liberation Serif" font-size="22" font-weight="500" text-anchor="middle" fill="#101010" stroke="#101010" stroke-width="0.4">士</text></g><g><circle cx="208.3" cy="128.70000000000002" r="18" fill="rgba(70,50,30,0.35)" filter="url(#pb2)"/><circle cx="207.3" cy="127.4" r="17.5" fill="url(#pc)" stroke="#8c7050" stroke-width="1"/><circle cx="207.3" cy="127.4" r="15.4" fill="none" stroke="rgba(255,242,222,0.35)" stroke-width="1.4"/><text transform="translate(207.3,127.4) scale(1.12,0.86)" x="0" y="8" font-family="Liberation Serif" font-size="22" font-weight="500" text-anchor="middle" fill="#101010" stroke="#101010" stroke-width="0.4">將</text></g><g><circle cx="245.8" cy="128.70000000000002" r="18" fill="rgba(70,50,30,0.35)" filter="url(#pb2)"/><circle cx="244.8" cy="127.4" r="17.5" fill="url(#pc)" stroke="#8c7050" stroke-width="1"/><circle cx="244.8" cy="127.4" r="15.4" fill="none" stroke="rgba(255,242,222,0.35)" stroke-width="1.4"/><text transform="translate(244.8,127.4) scale(1.12,0.86)" x="0" y="8" font-family="Liberation Serif" font-size="22" font-weight="500" text-anchor="middle" fill="#101010" stroke="#101010" stroke-width="0.4">士</text></g><g><circle cx="283.3" cy="128.70000000000002" r="18" fill="rgba(70,50,30,0.35)" filter="url(#pb2)"/><circle cx="282.3" cy="127.4" r="17.5" fill="url(#pc)" stroke="#8c7050" stroke-width="1"/><circle cx="282.3" cy="127.4" r="15.4" fill="none" stroke="rgba(255,242,222,0.35)" stroke-width="1.4"/><text transform="translate(282.3,127.4) scale(1.12,0.86)" x="0" y="8" font-family="Liberation Serif" font-size="22" font-weight="500" text-anchor="middle" fill="#101010" stroke="#101010" stroke-width="0.4">象</text></g><g><circle cx="320.8" cy="128.70000000000002" r="18" fill="rgba(70,50,30,0.35)" filter="url(#pb2)"/><circle cx="319.8" cy="127.4" r="17.5" fill="url(#pc)" stroke="#8c7050" stroke-width="1"/><circle cx="319.8" cy="127.4" r="15.4" fill="none" stroke="rgba(255,242,222,0.35)" stroke-width="1.4"/><text transform="translate(319.8,127.4) scale(1.12,0.86)" x="0" y="8" font-family="Liberation Serif" font-size="22" font-weight="500" text-anchor="middle" fill="#101010" stroke="#101010" stroke-width="0.4">馬</text></g><g><circle cx="358.3" cy="128.70000000000002" r="18" fill="rgba(70,50,30,0.35)" filter="url(#pb2)"/><circle cx="357.3" cy="127.4" r="17.5" fill="url(#pc)" stroke="#8c7050" stroke-width="1"/><circle cx="357.3" cy="127.4" r="15.4" fill="none" stroke="rgba(255,242,222,0.35)" stroke-width="1.4"/><text transform="translate(357.3,127.4) scale(1.12,0.86)" x="0" y="8" font-family="Liberation Serif" font-size="22" font-weight="500" text-anchor="middle" fill="#101010" stroke="#101010" stroke-width="0.4">車</text></g><g><circle cx="95.8" cy="203.70000000000002" r="18" fill="rgba(70,50,30,0.35)" filter="url(#pb2)"/><circle cx="94.8" cy="202.4" r="17.5" fill="url(#pc)" stroke="#8c7050" stroke-width="1"/><circle cx="94.8" cy="202.4" r="15.4" fill="none" stroke="rgba(255,242,222,0.35)" stroke-width="1.4"/><text transform="translate(94.8,202.4) scale(1.12,0.86)" x="0" y="8" font-family="Liberation Serif" font-size="22" font-weight="500" text-anchor="middle" fill="#101010" stroke="#101010" stroke-width="0.4">砲</text></g><g><circle cx="320.8" cy="203.70000000000002" r="18" fill="rgba(70,50,30,0.35)" filter="url(#pb2)"/><circle cx="319.8" cy="202.4" r="17.5" fill="url(#pc)" stroke="#8c7050" stroke-width="1"/><circle cx="319.8" cy="202.4" r="15.4" fill="none" stroke="rgba(255,242,222,0.35)" stroke-width="1.4"/><text transform="translate(319.8,202.4) scale(1.12,0.86)" x="0" y="8" font-family="Liberation Serif" font-size="22" font-weight="500" text-anchor="middle" fill="#101010" stroke="#101010" stroke-width="0.4">砲</text></g><g><circle cx="58.3" cy="241.20000000000002" r="18" fill="rgba(70,50,30,0.35)" filter="url(#pb2)"/><circle cx="57.3" cy="239.9" r="17.5" fill="url(#pc)" stroke="#8c7050" stroke-width="1"/><circle cx="57.3" cy="239.9" r="15.4" fill="none" stroke="rgba(255,242,222,0.35)" stroke-width="1.4"/><text transform="translate(57.3,239.9) scale(1.12,0.86)" x="0" y="8" font-family="Liberation Serif" font-size="22" font-weight="500" text-anchor="middle" fill="#101010" stroke="#101010" stroke-width="0.4">卒</text></g><g><circle cx="133.3" cy="241.20000000000002" r="18" fill="rgba(70,50,30,0.35)" filter="url(#pb2)"/><circle cx="132.3" cy="239.9" r="17.5" fill="url(#pc)" stroke="#8c7050" stroke-width="1"/><circle cx="132.3" cy="239.9" r="15.4" fill="none" stroke="rgba(255,242,222,0.35)" stroke-width="1.4"/><text transform="translate(132.3,239.9) scale(1.12,0.86)" x="0" y="8" font-family="Liberation Serif" font-size="22" font-weight="500" text-anchor="middle" fill="#101010" stroke="#101010" stroke-width="0.4">卒</text></g><g><circle cx="208.3" cy="241.20000000000002" r="18" fill="rgba(70,50,30,0.35)" filter="url(#pb2)"/><circle cx="207.3" cy="239.9" r="17.5" fill="url(#pc)" stroke="#8c7050" stroke-width="1"/><circle cx="207.3" cy="239.9" r="15.4" fill="none" stroke="rgba(255,242,222,0.35)" stroke-width="1.4"/><text transform="translate(207.3,239.9) scale(1.12,0.86)" x="0" y="8" font-family="Liberation Serif" font-size="22" font-weight="500" text-anchor="middle" fill="#101010" stroke="#101010" stroke-width="0.4">卒</text></g><g><circle cx="283.3" cy="241.20000000000002" r="18" fill="rgba(70,50,30,0.35)" filter="url(#pb2)"/><circle cx="282.3" cy="239.9" r="17.5" fill="url(#pc)" stroke="#8c7050" stroke-width="1"/><circle cx="282.3" cy="239.9" r="15.4" fill="none" stroke="rgba(255,242,222,0.35)" stroke-width="1.4"/><text transform="translate(282.3,239.9) scale(1.12,0.86)" x="0" y="8" font-family="Liberation Serif" font-size="22" font-weight="500" text-anchor="middle" fill="#101010" stroke="#101010" stroke-width="0.4">卒</text></g><g><circle cx="358.3" cy="241.20000000000002" r="18" fill="rgba(70,50,30,0.35)" filter="url(#pb2)"/><circle cx="357.3" cy="239.9" r="17.5" fill="url(#pc)" stroke="#8c7050" stroke-width="1"/><circle cx="357.3" cy="239.9" r="15.4" fill="none" stroke="rgba(255,242,222,0.35)" stroke-width="1.4"/><text transform="translate(357.3,239.9) scale(1.12,0.86)" x="0" y="8" font-family="Liberation Serif" font-size="22" font-weight="500" text-anchor="middle" fill="#101010" stroke="#101010" stroke-width="0.4">卒</text></g><g><circle cx="58.3" cy="353.7" r="18" fill="rgba(70,50,30,0.35)" filter="url(#pb2)"/><circle cx="57.3" cy="352.4" r="17.5" fill="url(#pc)" stroke="#8c7050" stroke-width="1"/><circle cx="57.3" cy="352.4" r="15.4" fill="none" stroke="rgba(255,242,222,0.35)" stroke-width="1.4"/><text transform="translate(57.3,352.4) scale(1.12,0.86)" x="0" y="8" font-family="Liberation Serif" font-size="22" font-weight="500" text-anchor="middle" fill="#c81818" stroke="#c81818" stroke-width="0.4">兵</text></g><g><circle cx="133.3" cy="353.7" r="18" fill="rgba(70,50,30,0.35)" filter="url(#pb2)"/><circle cx="132.3" cy="352.4" r="17.5" fill="url(#pc)" stroke="#8c7050" stroke-width="1"/><circle cx="132.3" cy="352.4" r="15.4" fill="none" stroke="rgba(255,242,222,0.35)" stroke-width="1.4"/><text transform="translate(132.3,352.4) scale(1.12,0.86)" x="0" y="8" font-family="Liberation Serif" font-size="22" font-weight="500" text-anchor="middle" fill="#c81818" stroke="#c81818" stroke-width="0.4">兵</text></g><g><circle cx="208.3" cy="353.7" r="18" fill="rgba(70,50,30,0.35)" filter="url(#pb2)"/><circle cx="207.3" cy="352.4" r="17.5" fill="url(#pc)" stroke="#8c7050" stroke-width="1"/><circle cx="207.3" cy="352.4" r="15.4" fill="none" stroke="rgba(255,242,222,0.35)" stroke-width="1.4"/><text transform="translate(207.3,352.4) scale(1.12,0.86)" x="0" y="8" font-family="Liberation Serif" font-size="22" font-weight="500" text-anchor="middle" fill="#c81818" stroke="#c81818" stroke-width="0.4">兵</text></g><g><circle cx="283.3" cy="353.7" r="18" fill="rgba(70,50,30,0.35)" filter="url(#pb2)"/><circle cx="282.3" cy="352.4" r="17.5" fill="url(#pc)" stroke="#8c7050" stroke-width="1"/><circle cx="282.3" cy="352.4" r="15.4" fill="none" stroke="rgba(255,242,222,0.35)" stroke-width="1.4"/><text transform="translate(282.3,352.4) scale(1.12,0.86)" x="0" y="8" font-family="Liberation Serif" font-size="22" font-weight="500" text-anchor="middle" fill="#c81818" stroke="#c81818" stroke-width="0.4">兵</text></g><g><circle cx="358.3" cy="353.7" r="18" fill="rgba(70,50,30,0.35)" filter="url(#pb2)"/><circle cx="357.3" cy="352.4" r="17.5" fill="url(#pc)" stroke="#8c7050" stroke-width="1"/><circle cx="357.3" cy="352.4" r="15.4" fill="none" stroke="rgba(255,242,222,0.35)" stroke-width="1.4"/><text transform="translate(357.3,352.4) scale(1.12,0.86)" x="0" y="8" font-family="Liberation Serif" font-size="22" font-weight="500" text-anchor="middle" fill="#c81818" stroke="#c81818" stroke-width="0.4">兵</text></g></g></svg>
<svg class="ab" style="left:411px;top:74px" width="191" height="283">
<filter id="mv" x="0" y="0" width="100%" height="100%">
 <feTurbulence type="turbulence" baseFrequency="0.045 0.055" numOctaves="3" seed="5"/>
 <feColorMatrix type="matrix" values="0 0 0 0 0.85  0 0 0 0 0.92  0 0 0 0 0.93  -2.2 0 0 0 0.75"/>
 <feComponentTransfer><feFuncA type="gamma" amplitude="0.4" exponent="1.5" offset="0"/></feComponentTransfer>
 <feGaussianBlur stdDeviation="0.35"/>
</filter>
<filter id="mf" x="0" y="0" width="100%" height="100%">
 <feTurbulence type="fractalNoise" baseFrequency="0.08" numOctaves="3" seed="9"/>
 <feColorMatrix type="matrix" values="0 0 0 0 0.5  0 0 0 0 0.58  0 0 0 0 0.6  1.4 0 0 0 -0.55"/>
</filter>
<rect width="191" height="283" fill="#a7babd"/>
<rect width="191" height="283" filter="url(#mf)"/>
<rect width="191" height="283" filter="url(#mv)"/>
<rect x="0" y="0" width="191" height="1" fill="#9c948c"/>
</svg>
<div class="ab" style="left:602px;top:74px;width:6px;height:283px;background:#c4d8f6"></div>
<div class="ab" style="left:602px;top:74px;width:1px;height:283px;background:#e8f0fa"></div>
<div class="ab" style="left:608px;top:74px;width:237px;height:25px;border-radius:3px 0 0 3px;background:linear-gradient(#e0eefe 0%,#d0e2fa 45%,#aecaf2 78%,#86aae2 100%);box-shadow:inset 0 1px 0 #f4f8ff"></div>
<div class="ab" style="left:612px;top:79px;width:2px;height:2px;background:#2a4a8a;box-shadow:1px 1px 0 #fff"></div><div class="ab" style="left:612px;top:83px;width:2px;height:2px;background:#2a4a8a;box-shadow:1px 1px 0 #fff"></div><div class="ab" style="left:612px;top:87px;width:2px;height:2px;background:#2a4a8a;box-shadow:1px 1px 0 #fff"></div><div class="ab" style="left:612px;top:91px;width:2px;height:2px;background:#2a4a8a;box-shadow:1px 1px 0 #fff"></div><div class="ab" style="left:612px;top:95px;width:2px;height:2px;background:#2a4a8a;box-shadow:1px 1px 0 #fff"></div>
<div class="t" style="left:620px;top:81px">棋谱</div>
<div class="ab" style="left:607px;top:99px;width:238px;height:20px;background:#f0f0f0;border-bottom:2px solid #acacac"></div><div class="ab" style="left:653px;top:99px;width:1px;height:19px;background:#a0a0a0;box-shadow:1px 0 0 #fff"></div><div class="t" style="left:613px;top:104px">回合</div><div class="ab" style="left:728px;top:99px;width:1px;height:19px;background:#a0a0a0;box-shadow:1px 0 0 #fff"></div><div class="t" style="left:659px;top:104px">棋步</div><div class="ab" style="left:780px;top:99px;width:1px;height:19px;background:#a0a0a0;box-shadow:1px 0 0 #fff"></div><div class="t" style="left:752px;top:104px">分数</div><div class="ab" style="left:827px;top:99px;width:1px;height:19px;background:#a0a0a0;box-shadow:1px 0 0 #fff"></div><div class="t" style="left:786px;top:104px">层数</div>
<div class="ab" style="left:607px;top:119px;width:238px;height:108px;background:#fff"></div>
<div class="ab" style="left:607px;top:136px;width:238px;height:1px;background:#ececec"></div>
<div class="ab" style="left:607px;top:153px;width:238px;height:1px;background:#ececec"></div>
<div class="ab" style="left:607px;top:170px;width:238px;height:1px;background:#ececec"></div>
<div class="ab" style="left:607px;top:187px;width:238px;height:1px;background:#ececec"></div>
<div class="ab" style="left:607px;top:204px;width:238px;height:1px;background:#ececec"></div>
<div class="ab" style="left:607px;top:221px;width:238px;height:1px;background:#ececec"></div>
<div class="ab" style="left:654px;top:119px;width:1px;height:108px;background:#ececec"></div>
<div class="ab" style="left:729px;top:119px;width:1px;height:108px;background:#ececec"></div>
<div class="ab" style="left:781px;top:119px;width:1px;height:108px;background:#ececec"></div>
<div class="ab" style="left:828px;top:119px;width:1px;height:108px;background:#ececec"></div>
<div class="ab" style="left:607px;top:227px;width:238px;height:18px;background:#eeeeee"></div>
<svg class="ab" style="left:611px;top:231px" width="6" height="8"><path d="M4.5 0.5L1 4L4.5 7.5Z" fill="#303030"/></svg>
<div class="ab" style="left:624px;top:228px;width:155px;height:15px;border:1px solid #a0a0a0;border-radius:3px;background:linear-gradient(#f6f6f6 0%,#e8e8e8 45%,#d4d4d4 55%,#cccccc 100%)"></div>
<div class="ab" style="left:697px;top:233px;width:1px;height:6px;background:#505050;box-shadow:2px 0 0 #505050,4px 0 0 #505050"></div>
<div class="ab" style="left:607px;top:245px;width:238px;height:93px;background:#fff"></div>
<div class="ab" style="left:607px;top:254px;width:238px;height:1px;background:#e6e6e6"></div>
<div class="ab" style="left:607px;top:263px;width:238px;height:1px;background:#e6e6e6"></div>
<div class="ab" style="left:607px;top:273px;width:238px;height:1px;background:#e6e6e6"></div>
<div class="ab" style="left:607px;top:282px;width:238px;height:1px;background:#e6e6e6"></div>
<div class="ab" style="left:607px;top:301px;width:238px;height:1px;background:#e6e6e6"></div>
<div class="ab" style="left:607px;top:310px;width:238px;height:1px;background:#e6e6e6"></div>
<div class="ab" style="left:607px;top:320px;width:238px;height:1px;background:#e6e6e6"></div>
<div class="ab" style="left:607px;top:329px;width:238px;height:1px;background:#e6e6e6"></div>
<div class="ab" style="left:607px;top:291px;width:238px;height:1px;background:#808080"></div>
<div class="ab" style="left:607px;top:337px;width:238px;height:1px;background:#f0a850"></div>
<div class="ab" style="left:607px;top:338px;width:238px;height:19px;background:linear-gradient(#f8fbff,#dce8fa)"></div>
<div class="ab" style="left:609px;top:337px;width:34px;height:20px;border:1px solid #4e6cac;border-top:none;border-radius:0 0 3px 3px;background:linear-gradient(#fff0d8,#ffd49a 50%,#f8b870)"></div><div class="t" style="left:614px;top:341px">棋谱</div>
<div class="ab" style="left:643px;top:337px;width:45px;height:20px;border:1px solid #6884bc;border-top:none;border-radius:0 0 3px 3px;background:linear-gradient(#eef4fe,#c8daf6 60%,#b8cef4)"></div><div class="t" style="left:648px;top:341px">开局库</div>
<div class="ab" style="left:688px;top:337px;width:34px;height:20px;border:1px solid #6884bc;border-top:none;border-radius:0 0 3px 3px;background:linear-gradient(#eef4fe,#c8daf6 60%,#b8cef4)"></div><div class="t" style="left:693px;top:341px">招法</div>
<div class="ab" style="left:722px;top:337px;width:56px;height:20px;border:1px solid #6884bc;border-top:none;border-radius:0 0 3px 3px;background:linear-gradient(#eef4fe,#c8daf6 60%,#b8cef4)"></div><div class="t" style="left:727px;top:341px">引擎输出</div>
<div class="ab" style="left:3px;top:357px;width:842px;height:2px;background:linear-gradient(#f8fcff,#dce8fa)"></div>
<div class="ab" style="left:4px;top:359px;width:841px;height:29px;border-radius:3px 0 0 3px;background:linear-gradient(#e0eefe 0%,#d0e2fa 45%,#aecaf2 78%,#86aae2 100%);box-shadow:inset 0 1px 0 #f4f8ff"></div>
<div class="ab" style="left:9px;top:367px;width:2px;height:2px;background:#2a4a8a;box-shadow:1px 1px 0 #fff"></div><div class="ab" style="left:9px;top:371px;width:2px;height:2px;background:#2a4a8a;box-shadow:1px 1px 0 #fff"></div><div class="ab" style="left:9px;top:375px;width:2px;height:2px;background:#2a4a8a;box-shadow:1px 1px 0 #fff"></div><div class="ab" style="left:9px;top:379px;width:2px;height:2px;background:#2a4a8a;box-shadow:1px 1px 0 #fff"></div><div class="ab" style="left:9px;top:383px;width:2px;height:2px;background:#2a4a8a;box-shadow:1px 1px 0 #fff"></div>
<div class="t" style="left:17px;top:369px">思考细节</div>
<div class="ab" style="left:3px;top:388px;width:842px;height:109px;background:#fff"></div>
<div class="ab" style="left:2px;top:357px;width:1.5px;height:140px;background:#7c8a9a"></div>
<div class="ab" style="left:4px;top:388px;width:841px;height:21px;background:#f0f0f0;border-bottom:2px solid #acacac"></div><div class="ab" style="left:59px;top:388px;width:1px;height:20px;background:#a0a0a0;box-shadow:1px 0 0 #fff"></div><div class="t" style="left:9px;top:393px">层数</div><div class="ab" style="left:115px;top:388px;width:1px;height:20px;background:#a0a0a0;box-shadow:1px 0 0 #fff"></div><div class="t" style="left:86px;top:393px">类型</div><div class="ab" style="left:171px;top:388px;width:1px;height:20px;background:#a0a0a0;box-shadow:1px 0 0 #fff"></div><div class="t" style="left:143px;top:393px">分数</div><div class="ab" style="left:217px;top:388px;width:1px;height:20px;background:#a0a0a0;box-shadow:1px 0 0 #fff"></div><div class="t" style="left:189px;top:393px">时间</div><div class="t" style="left:224px;top:393px">棋步</div>
<div class="ab" style="left:4px;top:429px;width:841px;height:1px;background:#ececec"></div>
<div class="ab" style="left:4px;top:448px;width:841px;height:1px;background:#ececec"></div>
<div class="ab" style="left:4px;top:467px;width:841px;height:1px;background:#ececec"></div>
<div class="ab" style="left:4px;top:486px;width:841px;height:1px;background:#ececec"></div>
<div class="ab" style="left:60px;top:409px;width:1px;height:88px;background:#ececec"></div>
<div class="ab" style="left:116px;top:409px;width:1px;height:88px;background:#ececec"></div>
<div class="ab" style="left:172px;top:409px;width:1px;height:88px;background:#ececec"></div>
<div class="ab" style="left:218px;top:409px;width:1px;height:88px;background:#ececec"></div>
</body></html>
